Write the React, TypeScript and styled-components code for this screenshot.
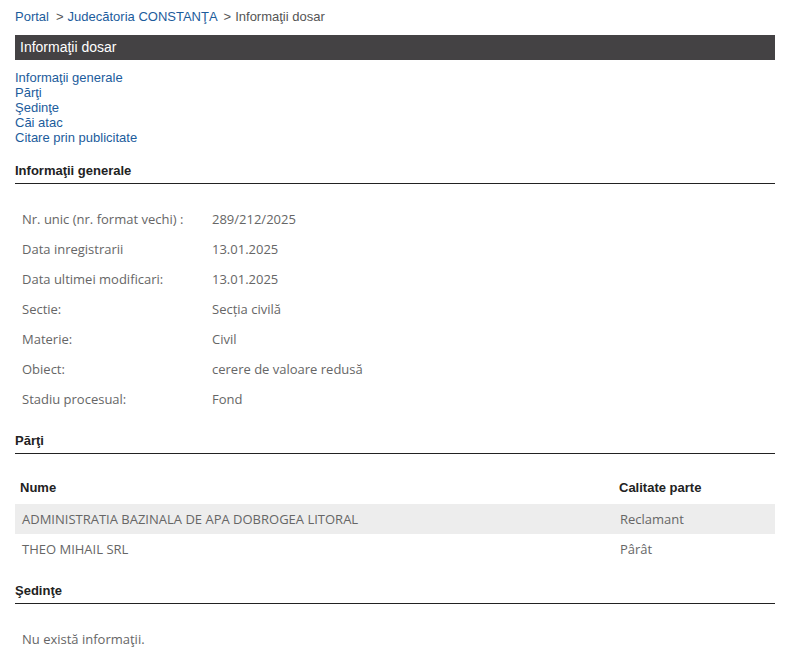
import React from 'react';
import styled, { createGlobalStyle } from 'styled-components';

const GlobalStyle = createGlobalStyle`
  html, body {
    margin: 0;
    padding: 0;
    background: #fff;
  }
  body {
    font-family: 'Liberation Sans', Arial, sans-serif;
  }
`;

const info = [
  ['Nr. unic (nr. format vechi) :', '289/212/2025'],
  ['Data inregistrarii', '13.01.2025'],
  ['Data ultimei modificari:', '13.01.2025'],
  ['Sectie:', 'Secția civilă'],
  ['Materie:', 'Civil'],
  ['Obiect:', 'cerere de valoare redusă'],
  ['Stadiu procesual:', 'Fond'],
];

const parti = [
  { nume: 'ADMINISTRATIA BAZINALA DE APA DOBROGEA LITORAL', calitate: 'Reclamant' },
  { nume: 'THEO MIHAIL SRL', calitate: 'Pârât' },
];

const Page = styled.div`
  width: 760px;
  padding: 8px 15px 20px;
`;

const Breadcrumb = styled.div`
  font-size: 13px;
  line-height: 18px;
  color: #555;
  height: 19px;
  margin-bottom: 8px;

  & a {
    color: #1c5c9c;
    text-decoration: none;
  }
  & span {
    margin: 0 4px 0 7px;
  }
  & span + a + span {
    margin-left: 6px;
  }
`;

const TitleBar = styled.div`
  background-color: #444244;
  color: #fff;
  font-size: 14px;
  height: 25px;
  line-height: 25px;
  padding-left: 5px;
  margin-bottom: 10px;
`;

const Menu = styled.ul`
  list-style-type: none;
  margin: 0 0 12px;
  padding: 0;

  & a {
    display: block;
    color: #1c5c9c;
    font-size: 13px;
    line-height: 15px;
    text-decoration: none;
  }
`;

const SectionTitle = styled.h3`
  margin: 0;
  font-size: 13px;
  font-weight: 700;
  color: #222;
  line-height: 16px;
  padding: 6px 0 4px;
  border-bottom: 1px solid #222;
`;

const InfoTable = styled.div`
  padding: 20px 7px 13px;
  font-family: 'Open Sans', sans-serif;
  font-size: 13px;
  color: #666;
`;

const InfoRow = styled.div`
  display: flex;
  height: 30px;
  line-height: 30px;
`;

const InfoLabel = styled.div`
  width: 190px;
  flex-shrink: 0;
`;

const InfoValue = styled.div`
  flex: 1;
`;

const PartiTable = styled.div`
  padding: 19px 0 13px;
`;

const Row = styled.div<{ $head?: boolean; $shaded?: boolean }>`
  display: grid;
  grid-template-columns: ${(p) => (p.$head ? '599px' : '598px')} 1fr;
  height: 30px;
  line-height: 30px;
  padding-left: ${(p) => (p.$head ? '5px' : '7px')};
  background-color: ${(p) => (p.$shaded ? '#ededed' : 'transparent')};
  font-family: ${(p) => (p.$head ? "'Liberation Sans', Arial, sans-serif" : "'Open Sans', sans-serif")};
  font-size: 13px;
  font-weight: ${(p) => (p.$head ? 700 : 400)};
  color: ${(p) => (p.$head ? '#222' : '#666')};
  margin-bottom: ${(p) => (p.$head ? '1px' : '0')};
`;

const Empty = styled.p`
  margin: 0;
  padding: 26px 7px 20px;
  font-family: 'Open Sans', sans-serif;
  font-size: 13px;
  color: #666;
`;

const App = () => {
  return (
    <Page>
      <GlobalStyle />
      <Breadcrumb>
        <a href="#">Portal</a>
        <span>&gt;</span>
        <a href="#">Judecătoria CONSTANŢA</a>
        <span>&gt;</span>
        Informaţii dosar
      </Breadcrumb>
      <TitleBar>Informaţii dosar</TitleBar>
      <Menu>
        <li><a href="#">Informaţii generale</a></li>
        <li><a href="#">Părţi</a></li>
        <li><a href="#">Şedinţe</a></li>
        <li><a href="#">Căi atac</a></li>
        <li><a href="#">Citare prin publicitate</a></li>
      </Menu>

      <SectionTitle>Informaţii generale</SectionTitle>
      <InfoTable>
        {info.map(([label, value]) => (
          <InfoRow key={label}>
            <InfoLabel>{label}</InfoLabel>
            <InfoValue>{value}</InfoValue>
          </InfoRow>
        ))}
      </InfoTable>

      <SectionTitle>Părţi</SectionTitle>
      <PartiTable>
        <Row $head>
          <div>Nume</div>
          <div>Calitate parte</div>
        </Row>
        {parti.map((p, i) => (
          <Row key={p.nume} $shaded={i % 2 === 0}>
            <div>{p.nume}</div>
            <div>{p.calitate}</div>
          </Row>
        ))}
      </PartiTable>

      <SectionTitle>Şedinţe</SectionTitle>
      <Empty>Nu există informaţii.</Empty>
    </Page>
  );
};

export default App;
